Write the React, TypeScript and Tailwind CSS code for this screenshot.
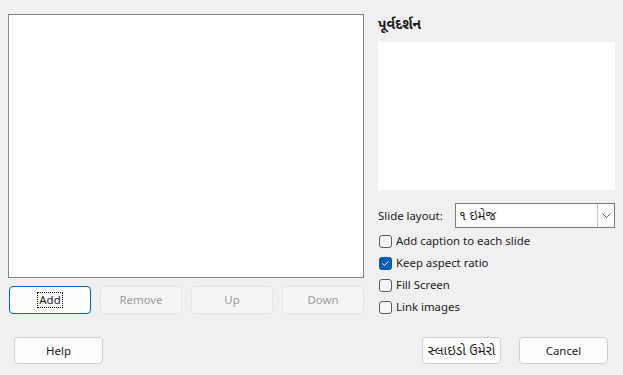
import React from 'react';

const font = { fontFamily: '"Noto Sans", "Noto Sans Gujarati", "Lohit Gujarati", sans-serif' };

const Btn: React.FC<{ label: string; className?: string; disabled?: boolean; focused?: boolean }> = ({
  label,
  className = '',
  disabled,
  focused,
}) => (
  <div
    className={`flex items-center justify-center rounded-[4px] border ${
      disabled
        ? 'border-[#e5e5e5] bg-[#f5f5f5] text-[#9d9d9d]'
        : focused
          ? 'border-[#0067c0] bg-[#fdfdfd] text-[#1b1b1b]'
          : 'border-[#d0d0d0] bg-[#fdfdfd] text-[#1b1b1b]'
    } ${className}`}
  >
    {focused ? (
      <span className="border border-dotted border-black px-[1px] leading-[14px]">{label}</span>
    ) : (
      label
    )}
  </div>
);

const Check: React.FC<{ label: string; checked?: boolean }> = ({ label, checked }) => (
  <div className="flex h-[22px] items-center gap-[4px] pl-[1px] text-[11.4px] text-[#1b1b1b]">
    {checked ? (
      <div className="flex h-[13px] w-[13px] items-center justify-center rounded-[3px] bg-[#005fb8]">
        <svg width="9" height="9" viewBox="0 0 9 9" fill="none">
          <path d="M1.8 4.8 L3.6 6.4 L7.2 2.6" stroke="white" strokeWidth="1" strokeLinecap="round" strokeLinejoin="round" />
        </svg>
      </div>
    ) : (
      <div className="h-[13px] w-[13px] rounded-[3px] border border-[#5c5c5c] bg-[#f7f7f7]" />
    )}
    <span>{label}</span>
  </div>
);

export default function App() {
  return (
    <div className="flex h-[375px] w-[623px] flex-col bg-[#f0f0f0]" style={font}>
      {/* Zona superior */}
      <div className="flex pl-[8px] pt-[14px]">
        <div className="flex w-[356px] flex-col">
          <div className="h-[264px] border border-[#828790] bg-white" />
          <div className="mt-[8px] flex gap-[9px] pl-[1px]">
            <Btn label="Add" focused className="h-[28px] w-[82px] text-[11.4px]" />
            <Btn label="Remove" disabled className="h-[28px] w-[82px] text-[11.4px]" />
            <Btn label="Up" disabled className="h-[28px] w-[82px] text-[11.4px]" />
            <Btn label="Down" disabled className="h-[28px] w-[82px] text-[11.4px]" />
          </div>
        </div>

        <div className="ml-[14px] flex w-[237px] flex-col">
          <div className="h-[20px] text-[14px] font-bold leading-[20px] text-[#1b1b1b]">પૂર્વદર્શન</div>
          <div className="mt-[8px] h-[148px] bg-white" />
          <div className="mt-[13px] flex h-[25px] items-center">
            <span className="w-[77px] text-[11.4px] text-[#1b1b1b]">Slide layout:</span>
            <div className="flex h-[25px] w-[160px] border border-[#7a7a7a] bg-white">
              <span className="flex-1 pl-[3px] text-[13px] leading-[23px] text-[#1b1b1b]">૧ ઇમેજ</span>
              <div className="flex w-[17px] items-center justify-center border-l border-[#c8c8c8]">
                <svg width="9" height="5" viewBox="0 0 9 5" fill="none">
                  <path d="M0.5 0.5 L4.5 4.5 L8.5 0.5" stroke="#606060" strokeWidth="1" />
                </svg>
              </div>
            </div>
          </div>
          <div className="mt-[2px] flex flex-col">
            <Check label="Add caption to each slide" />
            <Check label="Keep aspect ratio" checked />
            <Check label="Fill Screen" />
            <Check label="Link images" />
          </div>
        </div>
      </div>

      {/* Botones inferiores */}
      <div className="mt-[19px] flex pl-[14px] pr-[15px]">
        <Btn label="Help" className="h-[27px] w-[89px] text-[11.4px]" />
        <div className="ml-auto flex gap-[18px]">
          <Btn label="સ્લાઇડો ઉમેરો" className="h-[27px] w-[79px] text-[13.5px]" />
          <Btn label="Cancel" className="h-[27px] w-[89px] text-[11.4px]" />
        </div>
      </div>
    </div>
  );
}
